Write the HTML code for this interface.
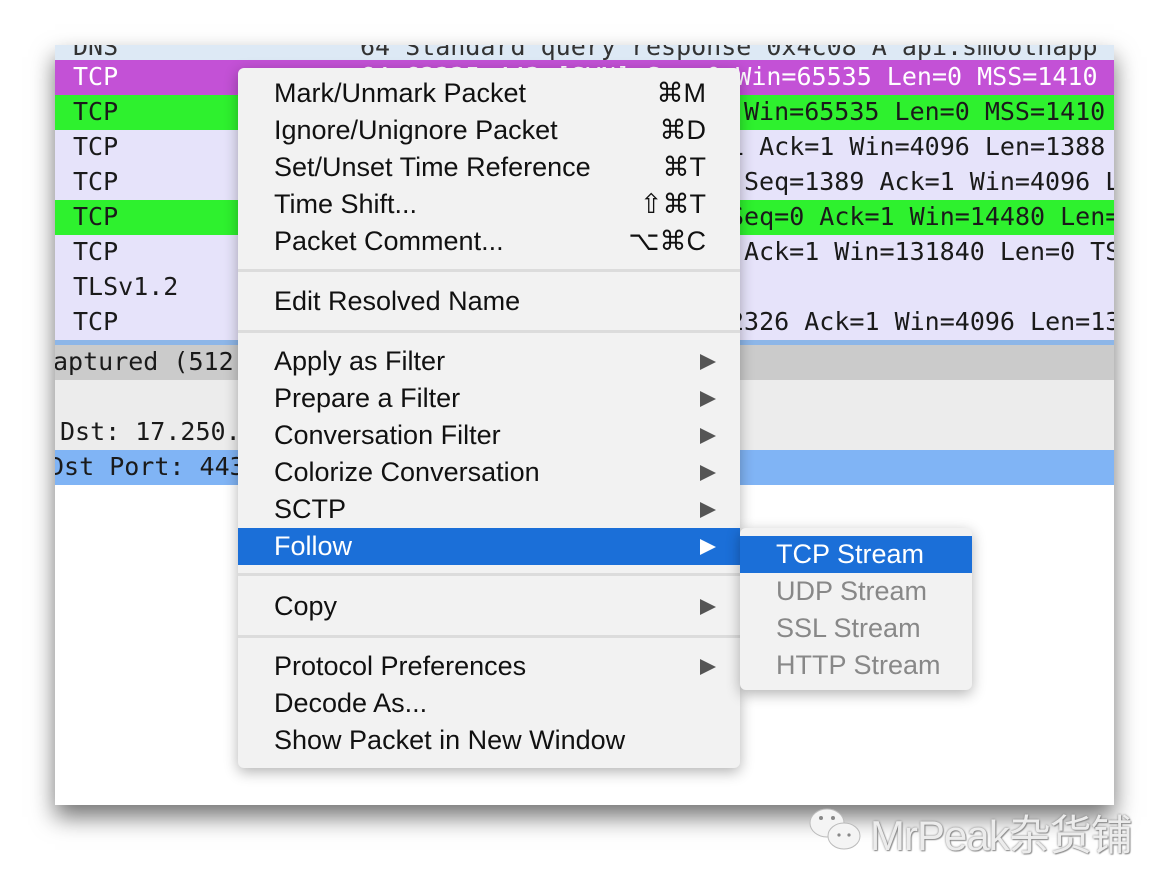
<!DOCTYPE html>
<html><head><meta charset="utf-8"><style>
*{margin:0;padding:0;box-sizing:border-box}
body{width:1170px;height:888px;background:#fff;position:relative;overflow:hidden;font-family:"Liberation Sans",sans-serif}
.win{position:absolute;left:55px;top:45px;width:1059px;height:760px;background:#fff;overflow:hidden;box-shadow:0 12px 22px rgba(0,0,0,.55)}
.row{position:absolute;left:0;width:1059px;height:35px;font-family:"DejaVu Sans Mono","Liberation Mono",monospace;font-size:25px;line-height:33px;color:#1a1a1a;white-space:pre}
.row span{position:absolute;top:0}
.m{position:absolute;left:238px;top:68px;width:502px;height:700px;background:#f2f2f2;border-radius:6px;box-shadow:0 4px 14px rgba(0,0,0,.3);font-size:27px;color:#111}
.it{position:absolute;left:0;width:502px;height:37px;line-height:37px;padding-left:36px}
.k{position:absolute;right:34px;top:0}
.ar{position:absolute;right:24px;top:11px;width:0;height:0;border-left:16px solid #555;border-top:8px solid transparent;border-bottom:8px solid transparent}
.sep{position:absolute;left:0;width:502px;height:3px;background:#dcdcdc}
.sub{position:absolute;left:740px;top:528px;width:232px;height:162px;background:#f2f2f2;border-radius:6px;box-shadow:0 4px 14px rgba(0,0,0,.3);font-size:27px;color:#888}
.sub div{position:absolute;left:0;width:232px;height:37px;line-height:37px;padding-left:36px}
</style></head><body>
<div class="win">
 <div class="row" style="top:-15px;background:#dde9f5;color:#333"><span style="left:18px">DNS</span><span style="left:305px">64 Standard query response 0x4c08 A api.smoothapp</span></div>
 <div class="row" style="top:15px;background:#c351d6;color:#fff"><span style="left:18px">TCP</span><span style="left:305px">64 62335→443 [SYN] Seq=0 Win=65535 Len=0 MSS=1410</span></div>
 <div class="row" style="top:50px;background:#2ef12e"><span style="left:18px">TCP</span><span style="left:689px">Win=65535 Len=0 MSS=1410</span></div>
 <div class="row" style="top:85px;background:#e6e3fa"><span style="left:18px">TCP</span><span style="left:674px">1 Ack=1 Win=4096 Len=1388</span></div>
 <div class="row" style="top:120px;background:#e6e3fa"><span style="left:18px">TCP</span><span style="left:689px">Seq=1389 Ack=1 Win=4096 Len</span></div>
 <div class="row" style="top:155px;background:#2ef12e"><span style="left:18px">TCP</span><span style="left:674px">Seq=0 Ack=1 Win=14480 Len=0</span></div>
 <div class="row" style="top:190px;background:#e6e3fa"><span style="left:18px">TCP</span><span style="left:689px">Ack=1 Win=131840 Len=0 TSval</span></div>
 <div class="row" style="top:225px;background:#e6e3fa"><span style="left:18px">TLSv1.2</span></div>
 <div class="row" style="top:260px;background:#e6e3fa;height:37px"><span style="left:674px">2326 Ack=1 Win=4096 Len=1388</span><span style="left:18px">TCP</span></div>
 <div style="position:absolute;top:295px;left:0;width:1059px;height:5px;background:#8db6e8"></div>
 <div class="row" style="top:300px;background:#cbcbcb"><span style="left:-2px">aptured (512 bytes)</span></div>
 <div style="position:absolute;top:335px;left:0;width:1059px;height:70px;background:#ececec"></div>
 <div class="row" style="top:370px;background:transparent"><span style="left:5px">Dst: 17.250.120.1</span></div>
 <div class="row" style="top:405px;background:#80b4f5"><span style="left:-6px">Dst Port: 443</span></div>
</div>
<div class="m">
 <div class="it" style="top:7px">Mark/Unmark Packet<span class="k">⌘M</span></div>
 <div class="it" style="top:44px">Ignore/Unignore Packet<span class="k">⌘D</span></div>
 <div class="it" style="top:81px">Set/Unset Time Reference<span class="k">⌘T</span></div>
 <div class="it" style="top:118px">Time Shift...<span class="k">⇧⌘T</span></div>
 <div class="it" style="top:155px">Packet Comment...<span class="k">⌥⌘C</span></div>
 <div class="sep" style="top:201px"></div>
 <div class="it" style="top:215px">Edit Resolved Name</div>
 <div class="sep" style="top:262px"></div>
 <div class="it" style="top:275px">Apply as Filter<span class="ar"></span></div>
 <div class="it" style="top:312px">Prepare a Filter<span class="ar"></span></div>
 <div class="it" style="top:349px">Conversation Filter<span class="ar"></span></div>
 <div class="it" style="top:386px">Colorize Conversation<span class="ar"></span></div>
 <div class="it" style="top:423px">SCTP<span class="ar"></span></div>
 <div class="it" style="top:460px;background:#1b6fd8;color:#fff">Follow<span class="ar" style="border-left-color:#fff"></span></div>
 <div class="sep" style="top:505px"></div>
 <div class="it" style="top:520px">Copy<span class="ar"></span></div>
 <div class="sep" style="top:567px"></div>
 <div class="it" style="top:580px">Protocol Preferences<span class="ar"></span></div>
 <div class="it" style="top:617px">Decode As...</div>
 <div class="it" style="top:654px">Show Packet in New Window</div>
</div>
<div class="sub">
 <div style="top:8px;background:#1b6fd8;color:#fff">TCP Stream</div>
 <div style="top:45px">UDP Stream</div>
 <div style="top:82px">SSL Stream</div>
 <div style="top:119px">HTTP Stream</div>
</div>
<div style="position:absolute;left:806px;top:804px;width:60px;height:50px">
 <svg width="60" height="50" viewBox="0 0 60 50"><ellipse cx="21" cy="19" rx="17" ry="14" fill="#f4f4f4" stroke="#bbb"/><ellipse cx="38" cy="32" rx="16" ry="13" fill="#f4f4f4" stroke="#bbb"/><circle cx="15" cy="14" r="2" fill="#888"/><circle cx="27" cy="14" r="2" fill="#888"/><circle cx="33" cy="31" r="1.6" fill="#888"/><circle cx="43" cy="31" r="1.6" fill="#888"/></svg>
</div>
<div style="position:absolute;left:870px;top:802px;font-size:42px;color:#ececec;text-shadow:0 0 2px #777,1px 1px 1px #999;font-family:'Liberation Sans','Noto Sans CJK SC',sans-serif;letter-spacing:-1px">MrPeak杂货铺</div>
</body></html>
